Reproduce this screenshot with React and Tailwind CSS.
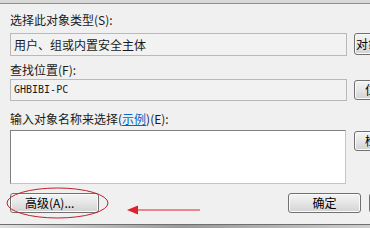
import React from 'react';

const font = { fontFamily: '"Noto Sans CJK SC", "Liberation Sans", sans-serif' };

function WinButton({ className = '', children }) {
  return (
    <div
      className={`flex items-center border border-[#707070] rounded-[3px] bg-gradient-to-b from-[#f4f4f4] via-[#e6e6e6] to-[#d2d2d2] text-[12px] text-black whitespace-nowrap overflow-hidden shadow-[inset_0_0_0_1px_#fbfbfb] ${className}`}
    >
      {children}
    </div>
  );
}

export default function App() {
  return (
    <div className="relative w-[370px] h-[228px] overflow-hidden bg-[#f0f0f0] text-[#1a1a1a]" style={font}>
      {/* top edge */}
      <div className="h-[4px] bg-[#d9d9d9] border-b border-[#8f8f8f]" />

      <div className="pl-[10px]">
        <div className="h-[20px] mt-[6px] text-[12px] leading-[20px]">选择此对象类型(S):</div>
        <div className="flex gap-[7px] mt-[3px]">
          <div className="w-[337px] h-[23px] border border-[#b9b9b9] bg-[#f2f2f2] pl-[3px] text-[12px] leading-[21px] shrink-0">
            用户、组或内置安全主体
          </div>
          <WinButton className="h-[22px] pl-[1px] shrink-0">对象类型(O)...</WinButton>
        </div>

        <div className="h-[19px] mt-[4px] text-[12px] leading-[19px]">查找位置(F):</div>
        <div className="flex gap-[7px] mt-[0px]">
          <div
            className="w-[337px] h-[22px] border border-[#b9b9b9] bg-[#f2f2f2] pl-[3px] text-[10px] leading-[20px] shrink-0"
            style={{ fontFamily: '"DejaVu Sans Mono", monospace' }}
          >
            GHBIBI-PC
          </div>
          <WinButton className="h-[20px] mt-[1px] pl-[10px] w-[80px] shrink-0">位置(L)...</WinButton>
        </div>

        <div className="h-[21px] mt-[7px] text-[12px] leading-[21px]">
          输入对象名称来选择(<span className="text-[#0066cc] underline">示例</span>)(E):
        </div>
        <div className="flex gap-[8px] mt-[1px]">
          <div className="w-[336px] h-[54px] bg-white border border-[#c4c4c4] border-t-[#7f7f7f] border-l-[#7f7f7f] shrink-0" />
          <WinButton className="h-[20px] mt-[1px] pl-[10px] w-[80px] shrink-0">检查名称(C)</WinButton>
        </div>

        <div className="flex items-center mt-[9px]">
          <WinButton className="w-[89px] h-[20px] pl-[14px] shrink-0">高级(A)...</WinButton>
          <div className="w-[189px] shrink-0" />
          <WinButton className="w-[73px] h-[20px] justify-center shrink-0">确定</WinButton>
          <WinButton className="w-[73px] h-[20px] ml-[8px] justify-center shrink-0">取消</WinButton>
        </div>
      </div>

      {/* bottom edge */}
      <div className="absolute left-0 right-0 bottom-0 h-[4px] border-t border-[#6f6f6f] bg-gradient-to-r from-[#e0e0e0] via-[#9a9a9a] to-[#cfcfcf]" />

      {/* red annotations */}
      <svg className="absolute left-0 top-0 pointer-events-none" width="370" height="228">
        <ellipse cx="57.5" cy="203" rx="50.5" ry="15" fill="none" stroke="#c0202a" strokeWidth="1" />
        <line x1="136" y1="210" x2="200" y2="210" stroke="#e0202a" strokeWidth="1.2" />
        <polygon points="127,210 138,205.5 138,214.5" fill="#e0202a" />
      </svg>
    </div>
  );
}
